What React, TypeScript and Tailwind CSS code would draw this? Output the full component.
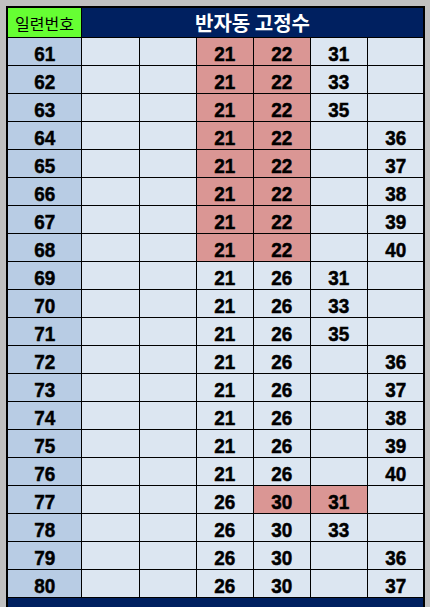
type Cell = string | null;

// [num, c2..c7], "p" suffix marks the pink fixed cells
const rows: [string, Cell[]][] = [
  ["61", [null, null, "21p", "22p", "31", null]],
  ["62", [null, null, "21p", "22p", "33", null]],
  ["63", [null, null, "21p", "22p", "35", null]],
  ["64", [null, null, "21p", "22p", null, "36"]],
  ["65", [null, null, "21p", "22p", null, "37"]],
  ["66", [null, null, "21p", "22p", null, "38"]],
  ["67", [null, null, "21p", "22p", null, "39"]],
  ["68", [null, null, "21p", "22p", null, "40"]],
  ["69", [null, null, "21", "26", "31", null]],
  ["70", [null, null, "21", "26", "33", null]],
  ["71", [null, null, "21", "26", "35", null]],
  ["72", [null, null, "21", "26", null, "36"]],
  ["73", [null, null, "21", "26", null, "37"]],
  ["74", [null, null, "21", "26", null, "38"]],
  ["75", [null, null, "21", "26", null, "39"]],
  ["76", [null, null, "21", "26", null, "40"]],
  ["77", [null, null, "26", "30p", "31p", null]],
  ["78", [null, null, "26", "30", "33", null]],
  ["79", [null, null, "26", "30", null, "36"]],
  ["80", [null, null, "26", "30", null, "37"]],
];

function Num({ children }: { children?: string }) {
  return (
    <span className="inline-block scale-x-90 font-['Liberation_Sans',Arial,sans-serif] text-[21px] font-bold leading-none text-black [-webkit-text-stroke:0.5px_black]">
      {children}
    </span>
  );
}

export default function App() {
  return (
    <div className="w-[430px] h-[607px] overflow-hidden bg-[#c0c0c0] pt-[6px] pl-[6px]">
      <div className="w-[419px] border-2 border-black bg-black">
        <div className="grid grid-cols-[73px_57px_56px_56px_56px_56px_55px] grid-rows-[29px] auto-rows-[27px] gap-px">
          <div className="bg-[#66ff33] flex items-center justify-center pt-[1px] font-['Noto_Sans_CJK_KR',sans-serif] text-[16px] text-black">
            일련번호
          </div>
          <div className="col-span-6 bg-[#002060] flex items-center justify-center font-['Noto_Sans_CJK_KR',sans-serif] text-[20px] font-bold text-white">
            반자동 고정수
          </div>

          {rows.map(([num, cells]) => (
            <div key={num} className="contents">
              <div className="bg-[#b8cce4] flex items-center justify-center pt-[3px]">
                <Num>{num}</Num>
              </div>
              {cells.map((c, i) => {
                const pink = c?.endsWith("p");
                return (
                  <div
                    key={i}
                    className={
                      (pink ? "bg-[#da9694]" : "bg-[#dce6f1]") +
                      " flex items-center justify-center pt-[3px]"
                    }
                  >
                    {c && <Num>{c.replace("p", "")}</Num>}
                  </div>
                );
              })}
            </div>
          ))}

          <div className="col-span-7 h-[20px] bg-[#002060] flex justify-center pt-[4px] font-['Noto_Sans_CJK_KR',sans-serif] text-[16px] font-bold text-white">
            합계
          </div>
        </div>
      </div>
    </div>
  );
}
